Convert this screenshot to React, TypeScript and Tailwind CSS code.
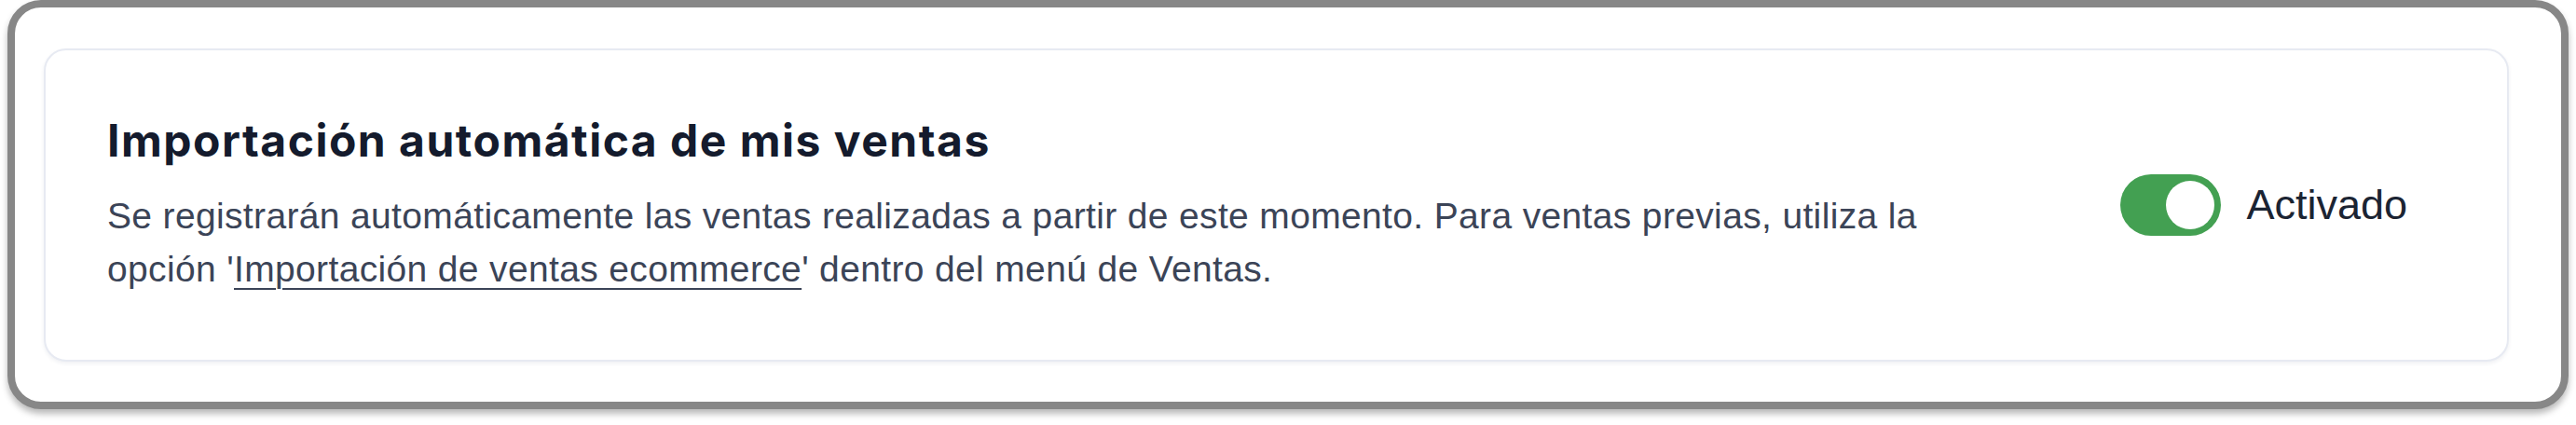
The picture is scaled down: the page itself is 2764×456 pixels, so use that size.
export default function App() {
  return (
    <div className="w-[2764px] h-[456px] bg-white">
      <div className="ml-[8px] w-[2748px] h-[439px] rounded-[36px] border-[8px] border-[#878787] bg-white shadow-[0_5px_7px_rgba(0,0,0,0.28)]">
        <div className="ml-[31px] mt-[44px] w-[2645px] h-[336px] rounded-[24px] border-2 border-[#e7eaf2] bg-white shadow-[0_2px_4px_rgba(30,40,80,0.07)] flex items-center justify-between pl-[66px] pr-[107px]">
          <div className="w-[1990px]">
            <h2 className="font-['Inter',sans-serif] font-bold text-[48px] tracking-[1.5px] leading-[56px] text-[#141b2d]">
              Importación automática de mis ventas
            </h2>
            <p className="mt-[24px] font-['Liberation_Sans',Arial,sans-serif] text-[39px] tracking-[0.35px] leading-[57px] text-[#3b4457]">
              Se registrarán automáticamente las ventas realizadas a partir de este momento. Para ventas previas, utiliza la opción '<a href="#" className="underline decoration-2 underline-offset-[7px]">Importación de ventas ecommerce</a>' dentro del menú de Ventas.
            </p>
          </div>
          <div className="flex items-center gap-[27px]">
            <button
              type="button"
              role="switch"
              aria-checked="true"
              className="w-[108px] h-[66px] rounded-full bg-[#43a052] p-[7px] flex items-center justify-end"
            >
              <span className="block w-[52px] h-[52px] rounded-full bg-white" />
            </button>
            <span className="font-['Liberation_Sans',Arial,sans-serif] text-[45px] leading-[52px] text-[#1b2433]">
              Activado
            </span>
          </div>
        </div>
      </div>
    </div>
  );
}
